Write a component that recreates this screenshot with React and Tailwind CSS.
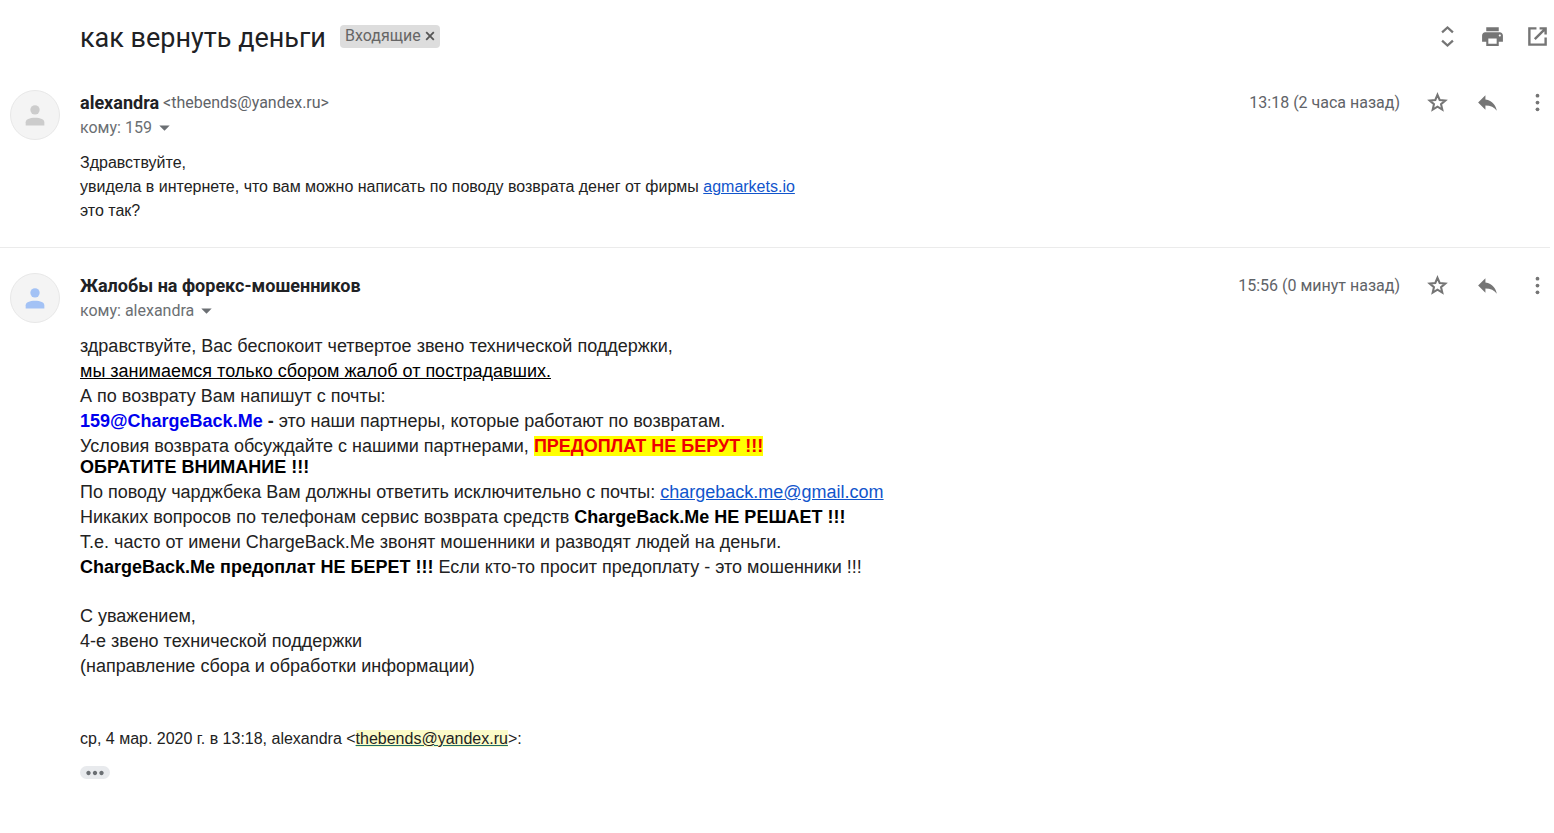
import React from 'react';
import { MdArrowDropDown, MdMoreHoriz, MdPrint, MdReply } from 'react-icons/md';

function UnfoldIcon({ className }) {
  return (
    <svg viewBox="0 0 24 24" fill="none" stroke="currentColor" strokeWidth="2.2" className={className}>
      <path d="M6.8 8 12 3.3 17.2 8M6.8 16l5.2 4.7 5.2-4.7" />
    </svg>
  );
}

function OpenIcon({ className }) {
  return (
    <svg viewBox="0 0 24 24" fill="none" stroke="currentColor" strokeWidth="2.3" className={className}>
      <path d="M11 4.2H4.2v15.6h15.6V13M14 4.2h5.8V10M19.8 4.2 9.4 14.6" />
    </svg>
  );
}

function DotsIcon({ className }) {
  return (
    <svg viewBox="0 0 24 24" fill="currentColor" className={className}>
      <circle cx="12" cy="5.5" r="1.8" />
      <circle cx="12" cy="12" r="1.8" />
      <circle cx="12" cy="18.5" r="1.8" />
    </svg>
  );
}

function StarIcon({ className }) {
  return (
    <svg viewBox="0 0 24 24" fill="none" stroke="currentColor" strokeWidth="2" className={className}>
      <path d="m12 4.6 2.1 5 5.4.5-4.1 3.5 1.2 5.2-4.6-2.8-4.6 2.8 1.2-5.2-4.1-3.5 5.4-.5z" />
    </svg>
  );
}

function CloseIcon({ className }) {
  return (
    <svg viewBox="0 0 14 14" fill="none" stroke="currentColor" strokeWidth="1.8" className={className}>
      <path d="m3.2 3.2 7.6 7.6M10.8 3.2l-7.6 7.6" />
    </svg>
  );
}

function PersonIcon({ className }) {
  return (
    <svg viewBox="0 0 24 24" fill="currentColor" className={className}>
      <circle cx="12" cy="7.6" r="4" />
      <path d="M4 21v-2.8c0-2.4 3.4-3.8 8-3.8s8 1.4 8 3.8V21z" />
    </svg>
  );
}

function IconButton({ icon: Icon, label }) {
  return (
    <button type="button" aria-label={label} className="shrink-0 text-[#757575] hover:text-black">
      <Icon className="w-[25px] h-[25px]" />
    </button>
  );
}

function Message({ name, email, to, time, avatarClass, children }) {
  return (
    <article className="flex gap-5 pl-2.5 pt-[25px] pb-6">
      <div className={`flex items-center justify-center shrink-0 w-[50px] h-[50px] rounded-full bg-[#f4f4f4] border border-[#e8e8e8] ${avatarClass}`}>
        <PersonIcon className="w-7 h-7" />
      </div>

      <div className="flex-1 min-w-0">
        <header className="flex items-start justify-between">
          <div className="leading-[25px]">
            <div className="flex items-center gap-1">
              <h3 className="text-[18px] font-bold text-[#202124]">{name}</h3>
              {email && <span className="text-[16px] text-[#5f6368]">&lt;{email}&gt;</span>}
            </div>
            <button type="button" className="flex items-center text-[16px] text-[#6b6f73]">
              кому: {to}
              <MdArrowDropDown className="w-[25px] h-[25px]" />
            </button>
          </div>

          <div className="flex items-center gap-[25px] h-[25px]">
            <time className="text-[16px] text-[#5f6368]">{time}</time>
            <IconButton icon={StarIcon} label="Пометить" />
            <IconButton icon={MdReply} label="Ответить" />
            <IconButton icon={DotsIcon} label="Ещё" />
          </div>
        </header>

        <div className="mt-[11px] font-['Liberation_Sans',Arial,sans-serif] text-[#222222]">{children}</div>
      </div>
    </article>
  );
}

export default function App() {
  return (
    <main className="min-h-screen bg-white pr-1 font-[Roboto,sans-serif]">
      <header className="flex items-center justify-between pt-3 pb-[5px] pl-20">
        <div className="flex items-center gap-3.5 h-12">
          <h2 className="pt-1 text-[27px] text-[#202124]">как вернуть деньги</h2>
          <span className="flex items-center gap-0.5 h-[23px] pl-[5px] pr-[3px] rounded bg-[#dddddd] text-[16px] text-[#666666]">
            Входящие
            <button type="button" aria-label="Удалить ярлык">
              <CloseIcon className="w-3.5 h-3.5 text-[#555555]" />
            </button>
          </span>
        </div>
        <div className="flex items-center gap-5">
          <IconButton icon={UnfoldIcon} label="Развернуть все" />
          <IconButton icon={MdPrint} label="Печать" />
          <IconButton icon={OpenIcon} label="В новом окне" />
        </div>
      </header>

      <Message
        name="alexandra"
        email="thebends@yandex.ru"
        to="159"
        time="13:18 (2 часа назад)"
        avatarClass="text-[#cccccc]"
      >
        <div className="text-[16px] leading-6">
          <p>Здравствуйте,</p>
          <p>
            увидела в интернете, что вам можно написать по поводу возврата денег от фирмы{' '}
            <a href="#agmarkets" className="text-[#1155cc] underline">agmarkets.io</a>
          </p>
          <p>это так?</p>
        </div>
      </Message>

      <hr className="border-[#ebebeb]" />

      <Message
        name="Жалобы на форекс-мошенников"
        to="alexandra"
        time="15:56 (0 минут назад)"
        avatarClass="text-[#a3c2f5]"
      >
        <div className="text-[18px] leading-[25px]">
          <p>здравствуйте, Вас беспокоит четвертое звено технической поддержки,</p>
          <p><u className="text-black">мы занимаемся только сбором жалоб от пострадавших.</u></p>
          <p>А по возврату Вам напишут с почты:</p>
          <p>
            <b className="text-[#0000ee]">159@ChargeBack.Me</b>
            <b> -</b> это наши партнеры, которые работают по возвратам.
          </p>
          <p>
            Условия возврата обсуждайте с нашими партнерами,{' '}
            <b className="bg-[#ffff00] text-[#ee0000]">ПРЕДОПЛАТ НЕ БЕРУТ !!!</b>
          </p>
          <p className="leading-4 pb-[5px] font-bold text-black">ОБРАТИТЕ ВНИМАНИЕ !!!</p>
          <p>
            По поводу чарджбека Вам должны ответить исключительно с почты:{' '}
            <a href="mailto:chargeback.me@gmail.com" className="text-[#1155cc] underline">chargeback.me@gmail.com</a>
          </p>
          <p>
            Никаких вопросов по телефонам сервис возврата средств{' '}
            <b className="text-black">ChargeBack.Me НЕ РЕШАЕТ !!!</b>
          </p>
          <p>Т.е. часто от имени ChargeBack.Me звонят мошенники и разводят людей на деньги.</p>
          <p>
            <b className="text-black">ChargeBack.Me предоплат НЕ БЕРЕТ !!!</b> Если кто-то просит предоплату - это мошенники !!!
          </p>
          <div className="mt-6">
            <p>С уважением,</p>
            <p>4-е звено технической поддержки</p>
            <p>(направление сбора и обработки информации)</p>
          </div>
        </div>

        <p className="mt-12 text-[16px] leading-6">
          ср, 4 мар. 2020 г. в 13:18, alexandra &lt;
          <a href="mailto:thebends@yandex.ru" className="bg-[#fbfbc8] underline decoration-[#1c6b6b]">thebends@yandex.ru</a>
          &gt;:
        </p>
        <button
          type="button"
          aria-label="Показать сокращённую часть"
          className="flex items-center justify-center mt-[15px] w-[30px] h-[13px] rounded-full bg-[#e8eaed] text-[#6b6f73]"
        >
          <MdMoreHoriz className="w-[26px] h-[26px]" />
        </button>
      </Message>
    </main>
  );
}
